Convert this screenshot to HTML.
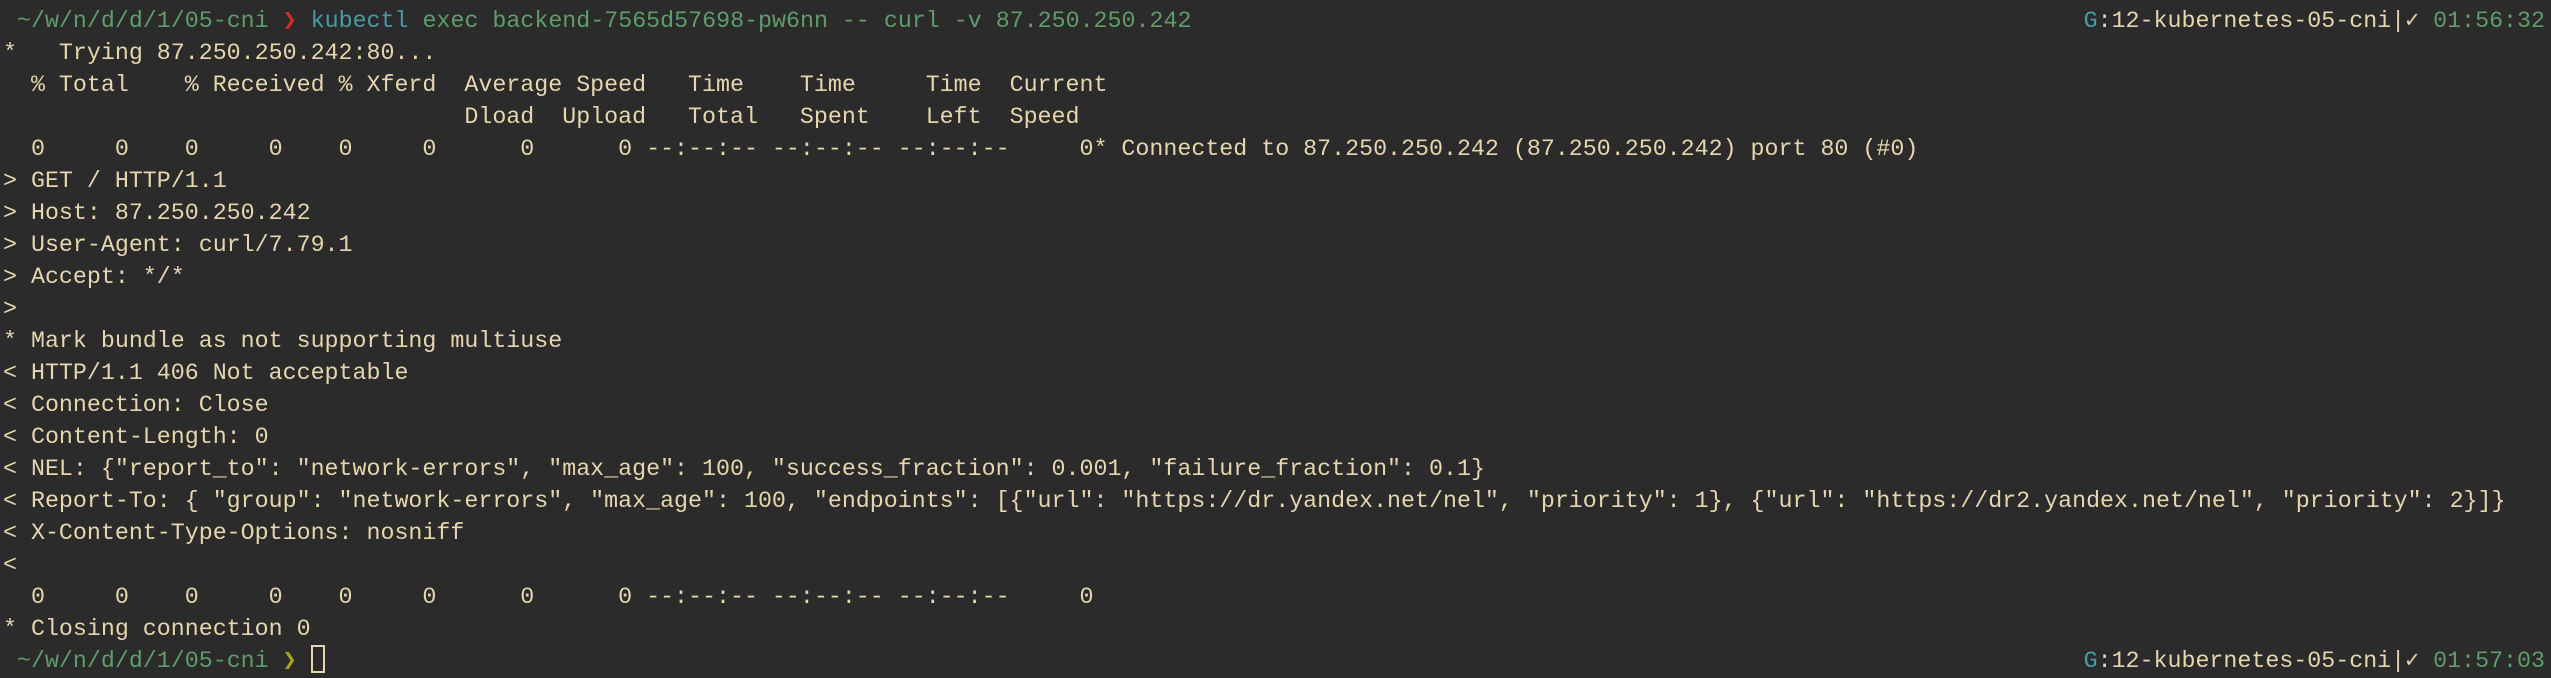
<!DOCTYPE html>
<html><head><meta charset="utf-8"><style>
html,body{margin:0;padding:0;background:#2b2b2b;width:2551px;height:678px;overflow:hidden}
pre{margin:0;position:absolute;left:3px;top:5px;font-family:"Liberation Mono","DejaVu Sans Mono",monospace;font-size:23.3px;line-height:32px;color:#e6d6ad;white-space:pre}
.g{color:#5f9c6a}.c{color:#4a9aa6}.r{color:#d42a2a}.y{color:#a8a220}
.rp{position:absolute;right:6px;font-family:"Liberation Mono","DejaVu Sans Mono",monospace;font-size:23.3px;line-height:32px;color:#e6d6ad;white-space:pre}
.cur{display:inline-block;width:14px;height:28px;border:2px solid #e6d6ad;box-sizing:border-box;vertical-align:-6px}
</style></head><body>
<pre> <span class="g">~/w/n/d/d/1/05-cni</span> <span class="r">❯</span> <span class="c">kubectl</span> <span class="g">exec backend-7565d57698-pw6nn -- curl -v 87.250.250.242</span>
*   Trying 87.250.250.242:80...
  % Total    % Received % Xferd  Average Speed   Time    Time     Time  Current
                                 Dload  Upload   Total   Spent    Left  Speed
  0     0    0     0    0     0      0      0 --:--:-- --:--:-- --:--:--     0* Connected to 87.250.250.242 (87.250.250.242) port 80 (#0)
&gt; GET / HTTP/1.1
&gt; Host: 87.250.250.242
&gt; User-Agent: curl/7.79.1
&gt; Accept: */*
&gt;
* Mark bundle as not supporting multiuse
&lt; HTTP/1.1 406 Not acceptable
&lt; Connection: Close
&lt; Content-Length: 0
&lt; NEL: {"report_to": "network-errors", "max_age": 100, "success_fraction": 0.001, "failure_fraction": 0.1}
&lt; Report-To: { "group": "network-errors", "max_age": 100, "endpoints": [{"url": "https://dr.yandex.net/nel", "priority": 1}, {"url": "https://dr2.yandex.net/nel", "priority": 2}]}
&lt; X-Content-Type-Options: nosniff
&lt;
  0     0    0     0    0     0      0      0 --:--:-- --:--:-- --:--:--     0
* Closing connection 0
 <span class="g">~/w/n/d/d/1/05-cni</span> <span class="y">❯</span> <span class="cur"></span></pre>
<div class="rp" style="top:5px"><span class="c">G</span>:12-kubernetes-05-cni|✓ <span class="g">01:56:32</span></div>
<div class="rp" style="top:645px"><span class="c">G</span>:12-kubernetes-05-cni|✓ <span class="g">01:57:03</span></div>
</body></html>
